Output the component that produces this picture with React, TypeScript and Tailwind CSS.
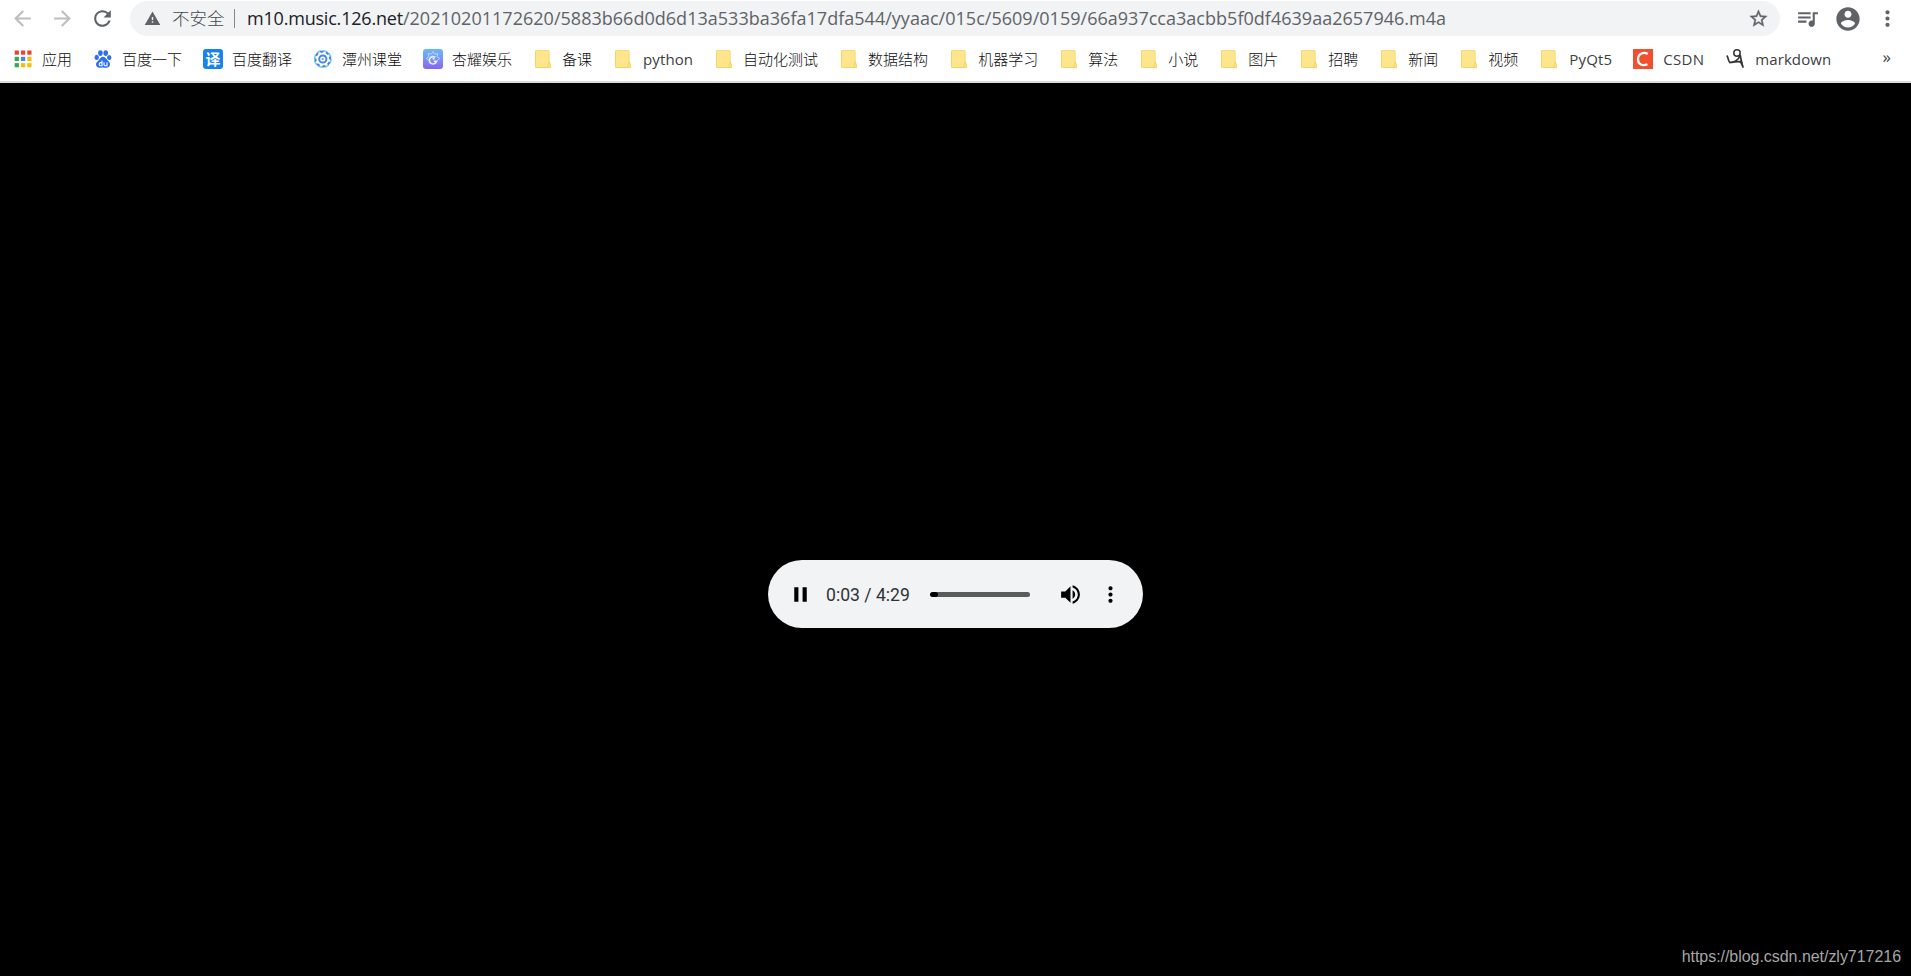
import React, { FC, ReactNode } from "react";

interface IconProps {
  path: string;
  className: string;
}

interface Bookmark {
  label: string;
  icon?: ReactNode;
  // latin labels get their own width and tracking
  labelClass?: string;
}

const paths = {
  back: "M20 11H7.83l5.59-5.59L12 4l-8 8 8 8 1.41-1.41L7.83 13H20v-2z",
  forward: "M12 4l-1.41 1.41L16.17 11H4v2h12.17l-5.58 5.59L12 20l8-8z",
  reload:
    "M17.65 6.35C16.2 4.9 14.21 4 12 4c-4.42 0-7.99 3.58-7.99 8s3.57 8 7.99 8c3.73 0 6.84-2.55 7.73-6h-2.08c-.82 2.33-3.04 4-5.65 4-3.31 0-6-2.69-6-6s2.69-6 6-6c1.66 0 3.14.69 4.22 1.78L13 11h7V4l-2.35 2.35z",
  warning: "M1 21h22L12 2 1 21zm12-3h-2v-2h2v2zm0-4h-2v-4h2v4z",
  star: "M22 9.24l-7.19-.62L12 2 9.19 8.63 2 9.24l5.46 4.73L5.82 21 12 17.27 18.18 21l-1.63-7.03L22 9.24zM12 15.4l-3.76 2.27 1-4.28-3.32-2.88 4.38-.38L12 6.1l1.71 4.04 4.38.38-3.32 2.88 1 4.28L12 15.4z",
  queue:
    "M15 6H3v2h12V6zm0 4H3v2h12v-2zM3 16h8v-2H3v2zM17 6v8.18c-.31-.11-.65-.18-1-.18-1.66 0-3 1.34-3 3s1.34 3 3 3 3-1.34 3-3V8h3V6h-5z",
  account:
    "M12 2C6.48 2 2 6.48 2 12s4.48 10 10 10 10-4.48 10-10S17.52 2 12 2zm0 3c1.66 0 3 1.34 3 3s-1.34 3-3 3-3-1.34-3-3 1.34-3 3-3zm0 14.2c-2.5 0-4.71-1.28-6-3.22.03-1.99 4-3.08 6-3.08 1.99 0 5.97 1.09 6 3.08-1.29 1.94-3.5 3.22-6 3.22z",
  more: "M12 8c1.1 0 2-.9 2-2s-.9-2-2-2-2 .9-2 2 .9 2 2 2zm0 2c-1.1 0-2 .9-2 2s.9 2 2 2 2-.9 2-2-.9-2-2-2zm0 6c-1.1 0-2 .9-2 2s.9 2 2 2 2-.9 2-2-.9-2-2-2z",
  pause: "M6 19h4V5H6v14zm8-14v14h4V5h-4z",
  volume:
    "M3 9v6h4l5 5V4L7 9H3zm13.5 3c0-1.77-1.02-3.29-2.5-4.03v8.05c1.48-.73 2.5-2.25 2.5-4.02zM14 3.23v2.06c2.89.86 5 3.54 5 6.71s-2.11 5.85-5 6.71v2.06c4.01-.91 7-4.49 7-8.77s-2.99-7.86-7-8.77z",
};

const Icon: FC<IconProps> = ({ path, className }) => (
  <svg viewBox="0 0 24 24" fill="currentColor" className={`block shrink-0 ${className}`}>
    <path d={path} />
  </svg>
);

const FolderIcon = () => (
  <svg viewBox="0 0 20 20" className="block size-5">
    <path d="M3.200 1H15a1.500 1.500 0 0 1 1.500 1.500V11l1.500 6v2H3.500A1.500 1.500 0 0 1 2 17.500V2.200A1.200 1.200 0 0 1 3.200 1z" fill="#ffe58c" />
    <path d="M2.500 2v15.500a1 1 0 0 0 1 1H17.500v-1.800l-1.300-3.500-1.200 3.500v1.800" fill="none" stroke="#f3d563" />
    <path d="M2.500 1.500H15a1 1 0 0 1 1 1V13" fill="none" stroke="#f5da78" />
  </svg>
);

const appColors = ["#ea4335", "#ea4335", "#ea4335", "#34a853", "#4285f4", "#fbbc05", "#34a853", "#fbbc05", "#fbbc05"];

const AppsIcon = () => (
  <svg viewBox="0 0 20 20" className="block size-5">
    {appColors.map((color, idx) => (
      <rect key={idx} x={1.700 + (idx % 3) * 6.300} y={1.500 + Math.floor(idx / 3) * 6.300} width="4.200" height="4.200" fill={color} />
    ))}
  </svg>
);

const BaiduIcon = () => (
  <svg viewBox="0 0 20 20" className="block size-5">
    <g fill="#2d6fee">
      <ellipse cx="3.700" cy="8.400" rx="2.200" ry="2.600" />
      <ellipse cx="7.400" cy="4.100" rx="2.300" ry="2.800" />
      <ellipse cx="12.700" cy="4.100" rx="2.300" ry="2.800" />
      <ellipse cx="16.200" cy="8.600" rx="2.200" ry="2.500" />
      <path d="M9.900 7.800c2 0 3 1.700 4.300 3.200 1.400 1.400 3 2.500 2.800 4.600-.2 2.300-2 3.200-3.800 3.200-1.200 0-2-.3-3.200-.3s-2 .3-3.400.3c-1.700 0-3.500-.9-3.600-3.200-.1-2 1.400-3.100 2.700-4.400 1.300-1.400 2.200-3.400 4.200-3.400z" />
    </g>
    <path d="M9 11.500v5.300H7.500a1.600 1.600 0 1 1 1.500-2.600M11 13.200v2.400q0 1.200 1.200 1.200H14v-3.600" fill="none" stroke="#fff" strokeWidth="1.100" />
  </svg>
);

const TranslateIcon = () => (
  <span className="flex size-5 items-center justify-center rounded-[3px] bg-[#1683f0] text-[15px] leading-none font-bold text-white">
    译
  </span>
);

const GearIcon = () => (
  <svg viewBox="0 0 20 20" className="block size-5" fill="none">
    <circle cx="9.800" cy="10" r="8.200" stroke="#6ed4f5" strokeWidth="1.800" strokeDasharray="4.400 2.040" />
    <circle cx="9.800" cy="10" r="7.400" stroke="#4a78e0" strokeWidth="2" strokeDasharray="3 2.812" strokeDashoffset="2.600" />
    <circle cx="9.800" cy="10" r="3.600" stroke="#4a84e8" strokeWidth="2" />
    <circle cx="9.800" cy="10" r="1.200" fill="#71b4f2" />
  </svg>
);

const StarBadgeIcon = () => (
  <span className="flex size-5 items-center justify-center rounded-[3px] bg-linear-to-b from-[#65b9f8] to-[#8464f0]">
    <svg viewBox="0 0 20 20" className="block size-5" fill="none">
      <path
        d="M10 2.500l1.700 2.700 3.100-.7-.7 3.100 2.700 1.900-2.700 1.800M10 2.500L8.300 5.200l-3.100-.7.700 3.100-2.700 1.900 2.700 1.800"
        stroke="#b9e0fb"
        strokeWidth=".9"
      />
      <path d="M12.300 8.300a3.700 3.700 0 1 0 1.300 4H10.800" stroke="#e8f0ff" strokeWidth="1.600" />
      <circle cx="10.600" cy="9.700" r="1.100" fill="#e8f0ff" />
    </svg>
  </span>
);

const CsdnIcon = () => (
  <svg viewBox="0 0 20 20" className="block size-5">
    <path d="M0 0h20v20H0z" fill="#f0502f" />
    <path d="M14.800 5C11 2.800 5.200 4.200 5 10.200c-.1 5.300 4.900 7.200 9.400 5" fill="none" stroke="#fff" strokeWidth="2.200" />
  </svg>
);

const MarkdownIcon = () => (
  <svg viewBox="0 0 20 20" className="block size-5" fill="none" stroke="#333">
    <circle cx="12" cy="4" r="3.200" strokeWidth="1.500" />
    <path d="M1.800 6.500c1.800 2 1 4.800 3 7C8.600 13.500 13 11.500 15.200 6.500" strokeWidth="1.700" />
    <path d="M4.800 13.500c4 0 7-1.700 11.200-.7M15.200 6.200c.8 4.300 1.500 8.300 2.900 12.300" strokeWidth="1.700" />
    <path d="M14.500 12.500l3.600 6-1.500-7z" fill="#333" strokeWidth=".5" />
  </svg>
);

const bookmarks: Bookmark[] = [
  { label: "应用", icon: <AppsIcon /> },
  { label: "百度一下", icon: <BaiduIcon /> },
  { label: "百度翻译", icon: <TranslateIcon /> },
  { label: "潭州课堂", icon: <GearIcon /> },
  { label: "杏耀娱乐", icon: <StarBadgeIcon /> },
  { label: "备课" },
  { label: "python", labelClass: "w-[51px] tracking-[0.1px]" },
  { label: "自动化测试" },
  { label: "数据结构" },
  { label: "机器学习" },
  { label: "算法" },
  { label: "小说" },
  { label: "图片" },
  { label: "招聘" },
  { label: "新闻" },
  { label: "视频" },
  { label: "PyQt5", labelClass: "w-[44px] tracking-[0.2px]" },
  { label: "CSDN", icon: <CsdnIcon />, labelClass: "w-[42px] tracking-[0.3px]" },
  { label: "markdown", icon: <MarkdownIcon />, labelClass: "w-[77px] tracking-[0.1px]" },
];

const AddressBar = () => (
  <div className="flex h-[37px] items-center text-[#5f6368]">
    <Icon path={paths.back} className="ml-[10px] size-[25px] text-[#bcbec0]" />
    <Icon path={paths.forward} className="ml-[15px] size-[25px] text-[#bcbec0]" />
    <Icon path={paths.reload} className="ml-[15px] size-[25px]" />
    <div className="ml-[15px] flex h-[35px] w-[1650px] items-center rounded-full bg-[#f1f3f4]">
      <Icon path={paths.warning} className="ml-[14px] size-[17px]" />
      <span className="ml-[11px] w-[54px] pb-px text-[17.5px] font-light whitespace-nowrap text-[#45484c]">不安全</span>
      <span className="ml-[8px] h-[19px] w-px bg-[#85888b]" />
      <span className="ml-[12px] pb-px text-[18px] tracking-[0.02px] whitespace-nowrap">
        <span className="tracking-[-0.2px] text-[#202124]">m10.music.126.net</span>
        /20210201172620/5883b66d0d6d13a533ba36fa17dfa544/yyaac/015c/5609/0159/66a937cca3acbb5f0df4639aa2657946.m4a
      </span>
      <Icon path={paths.star} className="mr-[11px] ml-auto size-[21px] stroke-current stroke-[0.4]" />
    </div>
    <Icon path={paths.queue} className="ml-[15px] size-[25px]" />
    <Icon path={paths.account} className="ml-[14px] size-7" />
    <Icon path={paths.more} className="ml-[13px] size-[25px]" />
  </div>
);

const BookmarkBar = () => (
  <div className="flex h-11 items-center gap-5 pl-[13px] text-[15px] text-[#3c4043]">
    {bookmarks.map(({ label, icon, labelClass }) => (
      <div key={label} className="flex shrink-0 items-center gap-[10px]">
        {icon ?? <FolderIcon />}
        <span className={`whitespace-nowrap ${labelClass ?? "-ml-px pr-px font-light text-[#0c0d0e]"}`}>{label}</span>
      </div>
    ))}
    <span className="mr-5 ml-auto pb-1 text-[17px]">»</span>
  </div>
);

const AudioPlayer = () => (
  <div className="flex h-[68px] w-[375px] items-center rounded-full bg-[#f1f3f4] text-black">
    <Icon path={paths.pause} className="ml-5 size-[25px]" />
    <span className="ml-[13px] w-[87px] pt-[2px] font-[Roboto,sans-serif] text-[17.6px] whitespace-nowrap text-[#303235]">
      0:03 / 4:29
    </span>
    <div className="ml-[17px] h-[5px] w-[100px] overflow-hidden rounded-full bg-[#5a5b5b]">
      <div className="h-full w-2 rounded-full bg-black" />
    </div>
    <Icon path={paths.volume} className="ml-[28px] size-[25px]" />
    <Icon path={paths.more} className="ml-[15px] size-[25px]" />
  </div>
);

const App = () => {
  return (
    <div className="flex h-screen flex-col overflow-hidden bg-black font-['Open_Sans','Noto_Sans_CJK_SC',sans-serif]">
      <header className="h-[83px] shrink-0 border-b-2 border-[#dcdcdc] bg-white">
        <AddressBar />
        <BookmarkBar />
      </header>
      <main className="relative flex min-h-0 flex-1 justify-center pt-[477px]">
        <AudioPlayer />
        <span className="absolute right-[10px] bottom-[7px] font-['Liberation_Sans',Arial,sans-serif] text-[16px] tracking-[-0.04px] text-[#a6a6a6]">
          https://blog.csdn.net/zly717216
        </span>
      </main>
    </div>
  );
};

export default App;
